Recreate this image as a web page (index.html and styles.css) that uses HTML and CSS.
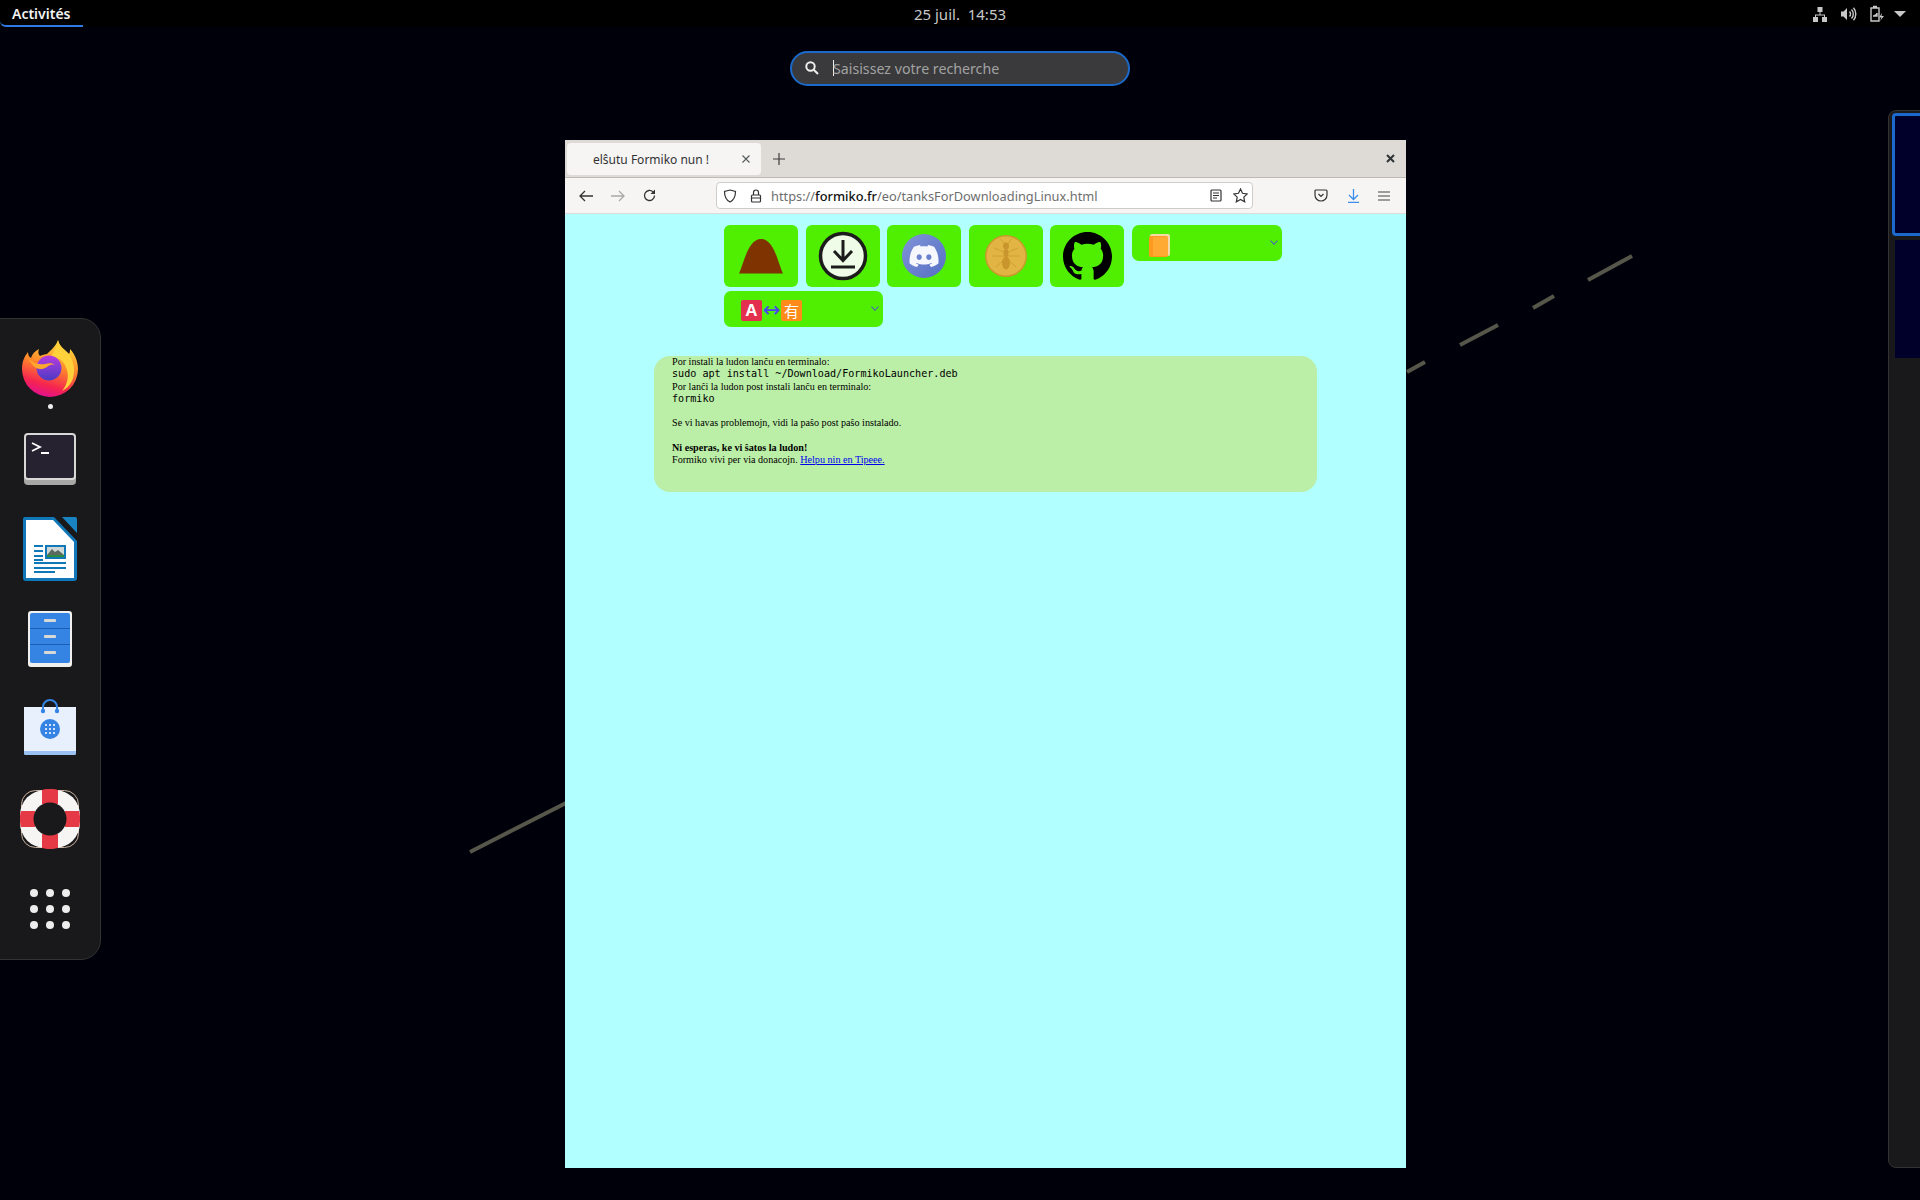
FILE: index.html
```html
<!DOCTYPE html>
<html lang="fr">

<head>
    <meta charset="UTF-8">
    <meta name="viewport" content="width=device-width, initial-scale=1.0">
    <title>Activités</title>
    <link rel="stylesheet" href="styles.css">
</head>

<body>
    <header class="topbar">
        <div class="activities">Activités</div>
        <div class="clock">25 juil.&nbsp;&nbsp;14:53</div>
        <div class="tray">
            <svg width="16" height="16" viewBox="0 0 16 16" fill="#c8c8c8">
                <rect x="5.500" y="1" width="5" height="5" />
                <rect x="1" y="11" width="5" height="5" />
                <rect x="10" y="11" width="5" height="5" />
                <path d="M7.500 6h1v2.500H13V11h-1V9.500H4V11H3V8.500h4.500z" />
            </svg>
            <svg width="17" height="16" viewBox="0 0 17 16" fill="none" stroke="#c8c8c8" stroke-width="1.400">
                <path d="M1 5.500h2.500L7 2v12l-3.500-3.500H1z" fill="#c8c8c8" stroke="none" />
                <path d="M9.500 5.500a3.500 3.500 0 0 1 0 5" />
                <path d="M11.500 3.500a6.500 6.500 0 0 1 0 9" />
                <path d="M13.500 1.800a9.500 9.500 0 0 1 0 12.400" />
            </svg>
            <svg width="16" height="17" viewBox="0 0 16 17" fill="none" stroke="#c8c8c8" stroke-width="1.400">
                <path d="M4 1.500h4M2 3h8v13H2z" />
                <path d="M4 11h4V8" fill="#c8c8c8" />
                <path d="M13 8l-3 4.500h2.500L11 16l4-5h-2.500z" fill="#c8c8c8" stroke="none" />
            </svg>
            <span class="tray-arrow"></span>
        </div>
    </header>

    <div class="search-row">
        <div class="search">
            <svg width="14" height="14" viewBox="0 0 14 14" fill="none" stroke="#eeeeec" stroke-width="2">
                <circle cx="5.500" cy="5.500" r="4.200" />
                <path d="M8.500 8.500l4.500 4.500" />
            </svg>
            <span class="caret"></span>
            <span class="search-text">Saisissez votre recherche</span>
        </div>
    </div>

    <svg class="streaks" width="1920" height="1200" viewBox="0 0 1920 1200" stroke="#56564a" stroke-width="4">
        <path d="M470 852L566 803" />
        <path d="M1407 372L1425 362" />
        <path d="M1460 345L1498 325" />
        <path d="M1533 308L1554 296" />
        <path d="M1588 280L1632 256" />
    </svg>

    <aside class="dock">
        <div class="dock-item dock-firefox">
            <svg width="58" height="60" viewBox="0 0 58 60">
                <defs>
                    <linearGradient id="foxBody" x1="0.700" y1="0" x2="0.400" y2="1">
                        <stop offset="0" stop-color="#ffe23f" />
                        <stop offset="0.450" stop-color="#ff8a2a" />
                        <stop offset="0.800" stop-color="#f5244f" />
                        <stop offset="1" stop-color="#e3118f" />
                    </linearGradient>
                    <linearGradient id="foxGlobe" x1="0.500" y1="0" x2="0.500" y2="1">
                        <stop offset="0" stop-color="#b83be0" />
                        <stop offset="1" stop-color="#4a3bc4" />
                    </linearGradient>
                </defs>
                <path d="M37 1c1 6 6 9 11 14 1-2 1-3 1-5 5 5 8 13 8 20a28 28 0 0 1-56 0c0-7 2-12 6-17 0 3 1 5 3 6 1-4 4-7 8-9-1 3-1 5 1 7 2-1 5-2 7-2 4-4 9-8 11-14z" fill="url(#foxBody)" />
                <path d="M37 1c1 6 6 9 11 14 5 8 7 18 3 27-3 5-6 8-10 10 6-7 8-17 3-26-3-6-9-8-14-8 3-6 7-11 7-17z" fill="#ffd23c" />
                <circle cx="28" cy="29" r="12.500" fill="url(#foxGlobe)" />
                <path d="M7 19c5 5 10 7 17 6 4-1 8-1 10 1-3-1-6 0-8 2-3 2-7 3-11 1-3-2-6-6-8-10z" fill="#ffa62e" />
            </svg>
            <span class="running-dot"></span>
        </div>
        <div class="dock-item dock-terminal">
            <svg width="52" height="52" viewBox="0 0 52 52">
                <rect x="0" y="3" width="52" height="49" rx="4" fill="#a8a8a6" />
                <rect x="0" y="0" width="52" height="47" rx="4" fill="#d8d8d6" />
                <rect x="2" y="2" width="48" height="43" rx="2" fill="#26222f" />
                <path d="M8 10l8 4-8 4" fill="none" stroke="#fff" stroke-width="1.800" />
                <rect x="17" y="19" width="8" height="2" fill="#fff" />
            </svg>
        </div>
        <div class="dock-item dock-writer">
            <svg width="54" height="64" viewBox="0 0 54 64">
                <path d="M2 0h29l23 24v37a3 3 0 0 1-3 3H3a3 3 0 0 1-3-3V2a2 2 0 0 1 2-2z" fill="#1078b8" />
                <path d="M3 3h27l21 22v36H3z" fill="#fff" />
                <path d="M39 0h13a2 2 0 0 1 2 2v14z" fill="#1a84c2" />
                <g fill="#1078b8">
                    <rect x="11" y="28" width="9" height="2" />
                    <rect x="11" y="33" width="9" height="2" />
                    <rect x="11" y="38" width="9" height="2" />
                    <rect x="11" y="42" width="9" height="2" />
                    <rect x="22" y="28" width="21" height="14" />
                    <rect x="11" y="45" width="32" height="2" />
                    <rect x="11" y="50" width="32" height="2" />
                    <rect x="11" y="54" width="21" height="2" />
                </g>
                <rect x="24" y="30" width="17" height="10" fill="#cfd8d6" />
                <path d="M24 38l5-6 3 3 3-2 6 5v2H24z" fill="#5a6a60" />
                <rect x="24" y="38" width="17" height="2" fill="#2e8a3c" />
            </svg>
        </div>
        <div class="dock-item dock-files">
            <svg width="44" height="56" viewBox="0 0 44 56">
                <rect x="0" y="0" width="44" height="56" rx="3" fill="#f0f0ee" />
                <rect x="2" y="2" width="40" height="50" rx="2" fill="#3584e4" />
                <rect x="2" y="17" width="40" height="1" fill="#1c5fb0" />
                <rect x="2" y="33" width="40" height="1" fill="#1c5fb0" />
                <g fill="#d8d8d6">
                    <rect x="16" y="8" width="12" height="3" rx="1" />
                    <rect x="16" y="24" width="12" height="3" rx="1" />
                    <rect x="16" y="40" width="12" height="3" rx="1" />
                </g>
            </svg>
        </div>
        <div class="dock-item dock-software">
            <svg width="52" height="56" viewBox="0 0 52 56">
                <path d="M0 8h52v46a2 2 0 0 1-2 2H2a2 2 0 0 1-2-2z" fill="#e8f0fe" />
                <path d="M0 52h52v2a2 2 0 0 1-2 2H2a2 2 0 0 1-2-2z" fill="#99c1f1" />
                <path d="M19 11V8a7 7 0 0 1 14 0v3" fill="none" stroke="#3584e4" stroke-width="2" />
                <circle cx="19" cy="12" r="2.200" fill="#3584e4" />
                <circle cx="33" cy="12" r="2.200" fill="#3584e4" />
                <circle cx="26" cy="30" r="10" fill="#3584e4" />
                <g fill="#cfe0fa">
                    <rect x="21" y="25" width="2" height="2" />
                    <rect x="25" y="25" width="2" height="2" />
                    <rect x="29" y="25" width="2" height="2" />
                    <rect x="21" y="29" width="2" height="2" />
                    <rect x="25" y="29" width="2" height="2" />
                    <rect x="29" y="29" width="2" height="2" />
                    <rect x="21" y="33" width="2" height="2" />
                    <rect x="25" y="33" width="2" height="2" />
                    <rect x="29" y="33" width="2" height="2" />
                </g>
            </svg>
        </div>
        <div class="dock-item dock-help">
            <svg width="60" height="60" viewBox="0 0 60 60">
                <rect x="1.500" y="1.500" width="57" height="57" rx="14" fill="none" stroke="#c8b09c" stroke-width="1" />
                <rect x="0" y="1" width="60" height="58" rx="25" fill="#f6f5f4" />
                <path d="M22 1c5-1.500 11-1.500 16 0v14H22zM22 45h16v14c-5 1.500-11 1.500-16 0zM1 22h14v16H1c-1.500-5-1.500-11 0-16zM45 22h14c1.500 5 1.500 11 0 16H45z" fill="#e63946" />
                <circle cx="30" cy="30" r="16.500" fill="#19191b" />
            </svg>
        </div>
        <div class="dock-item dock-grid">
            <span></span><span></span><span></span>
            <span></span><span></span><span></span>
            <span></span><span></span><span></span>
        </div>
    </aside>

    <aside class="workspaces">
        <div class="workspace workspace-active"></div>
        <div class="workspace"></div>
    </aside>

    <main class="window">
        <div class="tabbar">
            <div class="tab">
                <span class="tab-title">elŝutu Formiko nun !</span>
                <svg width="10" height="10" viewBox="0 0 10 10" stroke="#55595c" stroke-width="1.100">
                    <path d="M1.500 1.500l7 7M8.500 1.500l-7 7" />
                </svg>
            </div>
            <svg class="new-tab" width="12" height="12" viewBox="0 0 12 12" stroke="#3d3d3d" stroke-width="1.200">
                <path d="M6 0v12M0 6h12" />
            </svg>
            <svg class="window-close" width="9" height="9" viewBox="0 0 9 9" stroke="#2e3436" stroke-width="2">
                <path d="M1 1l7 7M8 1l-7 7" />
            </svg>
        </div>

        <div class="toolbar">
            <svg class="back" width="14" height="12" viewBox="0 0 14 12" fill="none" stroke="#333" stroke-width="1.300">
                <path d="M14 6H1M6 1L1 6l5 5" />
            </svg>
            <svg class="forward" width="14" height="12" viewBox="0 0 14 12" fill="none" stroke="#a9a9a9" stroke-width="1.300">
                <path d="M0 6h13M8 1l5 5-5 5" />
            </svg>
            <svg class="reload" width="13" height="13" viewBox="0 0 13 13" fill="none" stroke="#333" stroke-width="1.300">
                <path d="M11.500 6.500a5 5 0 1 1-1.500-3.600L11.500 4.500" />
                <path d="M12 0.500v4.500H7.500" fill="#333" stroke="none" />
            </svg>
            <div class="urlbar">
                <svg class="shield" width="14" height="14" viewBox="0 0 14 14" fill="none" stroke="#333" stroke-width="1.200">
                    <path d="M7 1l5.500 1.500c0 5-1.500 8.500-5.500 10.500C3 11 1.500 7.500 1.500 2.500z" />
                </svg>
                <svg class="lock" width="12" height="14" viewBox="0 0 12 14" fill="none" stroke="#333" stroke-width="1.200">
                    <rect x="1.500" y="6" width="9" height="7" rx="1" />
                    <path d="M3.500 6V3.500a2.500 2.500 0 0 1 5 0V6M1.500 9h9" />
                </svg>
                <span class="url">https://<b>formiko.fr</b>/eo/tanksForDownloadingLinux.html</span>
                <svg class="reader" width="12" height="13" viewBox="0 0 12 13" fill="none" stroke="#333" stroke-width="1.200">
                    <rect x="1" y="1" width="10" height="11" rx="1" />
                    <path d="M3 4h6M3 6.500h6M3 9h4" />
                </svg>
                <svg class="star" width="15" height="15" viewBox="0 0 15 15" fill="none" stroke="#333" stroke-width="1.200">
                    <path d="M7.500 1l2 4.300 4.700.6-3.400 3.200.9 4.700-4.200-2.300-4.200 2.300.9-4.700L.8 5.900l4.700-.6z" />
                </svg>
            </div>
            <svg class="pocket" width="14" height="13" viewBox="0 0 14 13" fill="none" stroke="#333" stroke-width="1.200">
                <path d="M2 1h10a1 1 0 0 1 1 1v4a6 6 0 0 1-12 0V2a1 1 0 0 1 1-1z" />
                <path d="M4.500 5L7 7.500 9.500 5" />
            </svg>
            <svg class="downloads" width="13" height="14" viewBox="0 0 13 14" fill="none" stroke="#3d8ee8" stroke-width="1.300">
                <path d="M6.500 0v10M2 6l4.500 4.500L11 6M1 13.300h11" />
            </svg>
            <svg class="hamburger" width="12" height="10" viewBox="0 0 12 10" stroke="#444" stroke-width="1.200">
                <path d="M0 1h12M0 5h12M0 9h12" />
            </svg>
        </div>

        <div class="page">
            <nav class="menu">
                <a class="menu-btn">
                    <svg width="44" height="35" viewBox="0 0 44 35">
                        <path d="M0 34.500C5 24 9 0 22 0s17 24 22 34.500z" fill="#7f3300" />
                    </svg>
                </a>
                <a class="menu-btn">
                    <svg width="50" height="50" viewBox="0 0 50 50">
                        <circle cx="25" cy="25" r="22.500" fill="#eefce8" stroke="#1c1c1c" stroke-width="3.500" />
                        <path d="M25 9v20M16 20l9 9.500 9-9.500" fill="none" stroke="#1c1c1c" stroke-width="3" />
                        <path d="M13 36h24" stroke="#1c1c1c" stroke-width="3" />
                    </svg>
                </a>
                <a class="menu-btn">
                    <svg width="44" height="44" viewBox="0 0 44 44">
                        <defs>
                            <linearGradient id="discordBg" x1="0" y1="0" x2="1" y2="1">
                                <stop offset="0" stop-color="#8094d8" />
                                <stop offset="1" stop-color="#566fc4" />
                            </linearGradient>
                        </defs>
                        <circle cx="22" cy="22" r="22" fill="url(#discordBg)" />
                        <g transform="translate(7.500 7.500) scale(1.210)">
                            <path fill="#f6f7fd" d="M20.317 4.3698a19.7913 19.7913 0 00-4.8851-1.5152.0741.0741 0 00-.0785.0371c-.211.3753-.4447.8648-.6083 1.2495-1.8447-.2762-3.68-.2762-5.4868 0-.1636-.3933-.4058-.8742-.6177-1.2495a.077.077 0 00-.0785-.037 19.7363 19.7363 0 00-4.8852 1.515.0699.0699 0 00-.0321.0277C.5334 9.0458-.319 13.5799.0992 18.0578a.0824.0824 0 00.0312.0561c2.0528 1.5076 4.0413 2.4228 5.9929 3.0294a.0777.0777 0 00.0842-.0276c.4616-.6304.8731-1.2952 1.226-1.9942a.076.076 0 00-.0416-.1057c-.6528-.2476-1.2743-.5495-1.8722-.8923a.077.077 0 01-.0076-.1277c.1258-.0943.2517-.1923.3718-.2914a.0743.0743 0 01.0776-.0105c3.9278 1.7933 8.18 1.7933 12.0614 0a.0739.0739 0 01.0785.0095c.1202.099.246.1981.3728.2924a.077.077 0 01-.0066.1276 12.2986 12.2986 0 01-1.873.8914.0766.0766 0 00-.0407.1067c.3604.698.7719 1.3628 1.225 1.9932a.076.076 0 00.0842.0286c1.961-.6067 3.9495-1.5219 6.0023-3.0294a.077.077 0 00.0313-.0552c.5004-5.177-.8382-9.6739-3.5485-13.6604a.061.061 0 00-.0312-.0286zM8.02 15.3312c-1.1825 0-2.1569-1.0857-2.1569-2.419 0-1.3332.9555-2.4189 2.157-2.4189 1.2108 0 2.1757 1.0952 2.1568 2.419 0 1.3332-.9555 2.4189-2.1569 2.4189zm7.9748 0c-1.1825 0-2.1569-1.0857-2.1569-2.419 0-1.3332.9554-2.4189 2.1569-2.4189 1.2108 0 2.1757 1.0952 2.1568 2.419 0 1.3332-.946 2.4189-2.1568 2.4189Z" />
                        </g>
                    </svg>
                </a>
                <a class="menu-btn">
                    <svg width="42" height="42" viewBox="0 0 42 42">
                        <circle cx="21" cy="21" r="21" fill="#c99a2e" />
                        <circle cx="21" cy="21" r="19.500" fill="#e2b443" />
                        <g fill="none" stroke="#c9962e" stroke-width="0.700">
                            <path d="M15 4l5 5M27 4l-5 5" />
                            <path d="M21 18L9 13M21 18l12-5M21 21H7M21 21h14M21 23L11 32M21 23l10 9" />
                        </g>
                        <g fill="#c9962e">
                            <ellipse cx="21" cy="11" rx="3" ry="3.500" />
                            <ellipse cx="21" cy="18" rx="2.500" ry="4" />
                            <ellipse cx="21" cy="28" rx="4" ry="6.500" />
                        </g>
                    </svg>
                </a>
                <a class="menu-btn">
                    <svg width="49" height="49" viewBox="0 0 16 16">
                        <path fill="#000" d="M8 0C3.58 0 0 3.58 0 8c0 3.54 2.29 6.53 5.47 7.59.4.07.55-.17.55-.38 0-.19-.01-.82-.01-1.490-2.010.37-2.530-.49-2.690-.94-.09-.23-.48-.94-.82-1.130-.28-.15-.68-.52-.01-.53.63-.01 1.080.58 1.230.82.72 1.210 1.870.87 2.330.66.07-.52.28-.87.51-1.070-1.780-.2-3.640-.89-3.640-3.950 0-.87.31-1.590.82-2.150-.08-.2-.36-1.020.08-2.120 0 0 .67-.21 2.200.82.64-.18 1.320-.27 2-.27.68 0 1.360.09 2 .27 1.530-1.040 2.200-.82 2.200-.82.44 1.100.16 1.920.08 2.120.51.56.82 1.270.82 2.150 0 3.070-1.870 3.750-3.650 3.950.29.25.54.73.54 1.480 0 1.070-.01 1.930-.01 2.200 0 .21.15.46.55.38A8.013 8.013 0 0016 8c0-4.420-3.580-8-8-8z" />
                    </svg>
                </a>
                <div class="menu-select menu-select-book">
                    <svg width="21" height="23" viewBox="0 0 21 23">
                        <rect x="1" y="0" width="20" height="22" rx="2" fill="#f6d9a8" />
                        <rect x="0" y="2" width="19" height="21" rx="2" fill="#ff9a1f" />
                        <rect x="4" y="3" width="15" height="19" fill="#ffab33" />
                    </svg>
                    <span class="chevron"></span>
                </div>
                <div class="menu-select menu-select-lang">
                    <span class="lang-box lang-a">A</span>
                    <span class="lang-arrow">↔</span>
                    <span class="lang-box lang-cjk">有</span>
                    <span class="chevron"></span>
                </div>
            </nav>

            <section class="install">
                Por instali la ludon lanĉu en terminalo:<br>
                <code>sudo apt install ~/Download/FormikoLauncher.deb</code><br>
                Por lanĉi la ludon post instali lanĉu en terminalo:<br>
                <code>formiko</code><br>
                <br>
                Se vi havas problemojn, vidi la paŝo post paŝo instalado.<br>
                <br>
                <b>Ni esperas, ke vi ŝatos la ludon!</b><br>
                Formiko vivi per via donacojn. <a href="#">Helpu nin en Tipeee.</a>
            </section>
        </div>
    </main>
</body>

</html>
```

FILE: styles.css
```css
body {
    margin: 0;
    width: 1920px;
    height: 1200px;
    overflow: hidden;
    position: relative;
    background-color: #00000b;
    font-family: 'Noto Sans', sans-serif;
}

svg {
    display: block;
    flex-shrink: 0;
}

/* top bar */

.topbar {
    height: 27px;
    background-color: #000;
    display: grid;
    grid-template-columns: 1fr auto 1fr;
    align-items: center;
    color: #e8e8e8;
    font-size: 14px;
}

.activities {
    justify-self: start;
    width: 83px;
    height: 27px;
    box-sizing: border-box;
    padding: 4px 0 0 12px;
    border-bottom: 2px solid #2f7ae0;
    border-bottom-left-radius: 6px;
    font-weight: 600;
    color: #f2f2f2;
    line-height: 19px;
}

.clock {
    color: #c8c8c8;
    font-size: 15px;
}

.tray {
    justify-self: end;
    display: flex;
    align-items: center;
    gap: 12px;
    padding-right: 14px;
}

.tray-arrow {
    width: 0;
    height: 0;
    margin-left: -3px;
    border-left: 6px solid transparent;
    border-right: 6px solid transparent;
    border-top: 6px solid #c8c8c8;
}

/* search */

.search-row {
    display: flex;
    justify-content: center;
    padding-top: 24px;
}

.search {
    width: 340px;
    height: 35px;
    box-sizing: border-box;
    border: 2px solid #1b6acb;
    border-radius: 18px;
    background-color: #3a3a3c;
    display: flex;
    align-items: center;
    padding: 0 0 1px 13px;
    font-size: 14.200px;
    color: #a2a2a2;
}

.caret {
    width: 1px;
    height: 16px;
    margin-left: 14px;
    background-color: #eee;
}

.search-text {
    margin-left: -1px;
}

/* background lines */

.streaks {
    position: absolute;
    left: 0;
    top: 0;
}

/* dock */

.dock {
    position: absolute;
    left: -1px;
    top: 318px;
    width: 102px;
    height: 642px;
    box-sizing: border-box;
    background-color: #19191b;
    border: 1px solid #333;
    border-radius: 0 20px 20px 0;
}

.dock-item {
    position: absolute;
}

.dock-firefox {
    left: 21px;
    top: 20px;
}

.running-dot {
    position: absolute;
    left: 27px;
    top: 65px;
    width: 5px;
    height: 5px;
    border-radius: 50%;
    background-color: #eee;
}

.dock-terminal {
    left: 24px;
    top: 114px;
}

.dock-writer {
    left: 23px;
    top: 198px;
}

.dock-files {
    left: 28px;
    top: 292px;
}

.dock-software {
    left: 24px;
    top: 380px;
}

.dock-help {
    left: 20px;
    top: 470px;
}

.dock-grid {
    left: 30px;
    top: 570px;
    display: grid;
    grid-template-columns: repeat(3, 8px);
    gap: 8px;
}

.dock-grid span {
    width: 8px;
    height: 8px;
    border-radius: 50%;
    background-color: #eee;
}

/* workspace thumbnails */

.workspaces {
    position: absolute;
    left: 1888px;
    top: 110px;
    width: 40px;
    height: 1058px;
    box-sizing: border-box;
    background-color: #19191b;
    border: 1px solid #333;
    border-radius: 8px 0 0 8px;
    padding: 2px 0 0 3px;
}

.workspace {
    height: 118px;
    margin-left: 3px;
    background-color: #00002a;
}

.workspace-active {
    height: 123px;
    box-sizing: border-box;
    margin: 0 0 4px;
    border: 3px solid #1b6acb;
    border-radius: 4px;
    background-color: #00002a;
}

/* browser window */

.window {
    position: absolute;
    left: 565px;
    top: 140px;
    width: 841px;
    height: 1028px;
    display: flex;
    flex-direction: column;
}

.tabbar {
    height: 38px;
    flex-shrink: 0;
    box-sizing: border-box;
    background-color: #dedad6;
    border-bottom: 1px solid #bfbab5;
    display: flex;
    align-items: center;
    padding: 0 11px 0 2px;
}

.tab {
    width: 194px;
    height: 32px;
    box-sizing: border-box;
    background-color: #f6f5f4;
    border-radius: 4px;
    display: flex;
    align-items: center;
    justify-content: space-between;
    padding: 0 10px 0 26px;
    font-size: 12px;
    color: #333;
}

.tab-title {
    padding-top: 1px;
}

.new-tab {
    margin: 1px 0 0 12px;
}

.window-close {
    margin-left: auto;
}

.toolbar {
    height: 36px;
    flex-shrink: 0;
    box-sizing: border-box;
    background-color: #f6f5f4;
    border-bottom: 1px solid #dedcd9;
    display: flex;
    align-items: center;
    padding: 0 15px 0 14px;
}

.forward {
    margin-left: 18px;
}

.reload {
    margin-left: 18px;
}

.urlbar {
    width: 537px;
    height: 27px;
    flex-shrink: 0;
    margin-left: 60px;
    box-sizing: border-box;
    background-color: #fff;
    border: 1px solid #cfcdca;
    border-radius: 4px;
    display: flex;
    align-items: center;
    padding: 0 4px 0 6px;
}

.lock {
    margin-left: 13px;
}

.url {
    margin-left: 9px;
    font-size: 12.800px;
    color: #6e6e6e;
    white-space: nowrap;
}

.url b {
    font-weight: 500;
    color: #111;
}

.reader {
    margin-left: auto;
}

.star {
    margin-left: 11px;
}

.pocket {
    margin-left: 61px;
}

.downloads {
    margin-left: 18.500px;
}

.hamburger {
    margin-left: 18.500px;
}

/* page */

.page {
    flex: 1;
    background-color: #b2ffff;
    font-family: 'Liberation Serif', serif;
}

.menu {
    display: flex;
    flex-wrap: wrap;
    align-items: flex-start;
    column-gap: 7.500px;
    row-gap: 4px;
    width: 570px;
    margin-left: 159px;
    padding-top: 11px;
}

.menu-btn {
    width: 74px;
    height: 62px;
    background-color: #50ee00;
    border-radius: 6px;
    display: flex;
    align-items: center;
    justify-content: center;
}

.menu-select {
    height: 36px;
    box-sizing: border-box;
    background-color: #50ee00;
    border-radius: 7px;
    display: flex;
    align-items: center;
    position: relative;
}

.menu-select-book {
    width: 150px;
    padding: 4px 0 0 17px;
}

.menu-select-lang {
    width: 159px;
    padding: 3px 0 0 17px;
}

.chevron {
    position: absolute;
    right: 5px;
    top: 13px;
    width: 5px;
    height: 5px;
    border-right: 1.500px solid #4a55d8;
    border-bottom: 1.500px solid #4a55d8;
    transform: rotate(45deg) scale(0.9);
}

.lang-box {
    width: 21px;
    height: 21px;
    border-radius: 2px;
    display: flex;
    align-items: center;
    justify-content: center;
    color: #fff;
}

.lang-a {
    background-color: #e3304e;
    font-family: 'Liberation Sans', sans-serif;
    font-weight: bold;
    font-size: 17px;
}

.lang-cjk {
    background-color: #ff8c1a;
    font-family: 'Noto Sans CJK SC', sans-serif;
    font-size: 15px;
}

.lang-arrow {
    width: 19px;
    text-align: center;
    color: #4a44ee;
    font-family: 'DejaVu Sans', sans-serif;
    font-size: 21px;
    line-height: 21px;
}

.install {
    width: 663px;
    height: 136px;
    box-sizing: border-box;
    margin: 29px 0 0 89px;
    padding: 0 0 0 18px;
    background-color: #bbeea6;
    border-radius: 16px;
    font-size: 10.150px;
    line-height: 12.250px;
    color: #000;
}

.install code {
    font-family: 'DejaVu Sans Mono', monospace;
    font-size: 10.100px;
}
```
